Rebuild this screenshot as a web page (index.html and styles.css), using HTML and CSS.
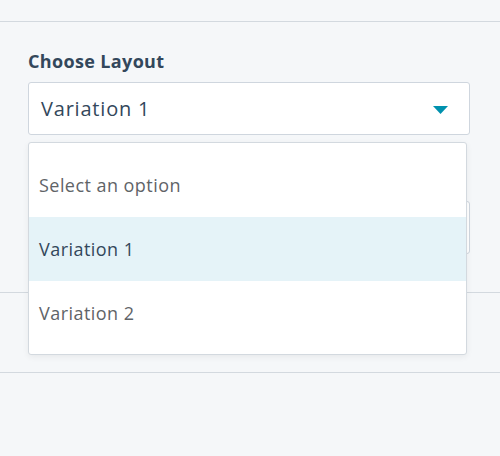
FILE: index.html
```html
<!DOCTYPE html>
<html>
<head>
<meta charset="utf-8">
<link rel="stylesheet" href="styles.css">
</head>
<body>
<div class="topbar"></div>
<div class="panel">
  <div class="field">
    <label class="label">Choose Layout</label>
    <div class="select">
      <span class="value">Variation 1</span>
      <svg class="caret" width="15" height="8" viewBox="0 0 15 8"><path d="M0 0 H15 L7.5 8 Z" fill="#0091ae"/></svg>
    </div>
  </div>
  <div class="field2">
    <div class="input"></div>
  </div>
  <div class="menu">
    <div class="option">Select an option</div>
    <div class="option active">Variation 1</div>
    <div class="option">Variation 2</div>
  </div>
</div>
<div class="section"></div>
<div class="footer"></div>
</body>
</html>
```
FILE: styles.css
```css
html, body {
  margin: 0;
  padding: 0;
  background: #f5f7f9;
  font-family: "Open Sans", "Noto Sans", sans-serif;
  color: #33475b;
}
.topbar {
  height: 21px;
  border-bottom: 1px solid #d3d9df;
}
.panel {
  position: relative;
  padding: 28px 30px 0 28px;
  height: 242px;
  border-bottom: 1px solid #d3d9df;
}
.label {
  display: block;
  font-weight: 700;
  font-size: 18px;
  line-height: 22px;
  letter-spacing: 0.35px;
  margin-bottom: 10px;
  color: #33475b;
}
.select {
  height: 51px;
  background: #fff;
  border: 1px solid #cfd6de;
  border-radius: 3px;
  display: flex;
  align-items: center;
  justify-content: space-between;
  padding: 0 21px 0 12px;
}
.value {
  font-size: 20px;
  letter-spacing: 0.8px;
  color: #33475b;
}
.caret {
  display: block;
  margin-top: 2px;
}
.field2 {
  margin-top: 66px;
}
.input {
  height: 51px;
  background: #fff;
  border: 1px solid #cfd6de;
  border-radius: 3px;
}
.menu {
  position: absolute;
  left: 28px;
  top: 120px;
  width: 437px;
  padding: 10px 0 9px;
  background: #fff;
  border: 1px solid #d3d9df;
  border-radius: 3px;
  box-shadow: 0 2px 6px rgba(0,0,0,0.06);
}
.option {
  height: 64px;
  display: flex;
  align-items: center;
  padding: 0 10px;
  font-size: 18px;
  letter-spacing: 0.45px;
  color: #5f6468;
}
.option.active {
  background: #e5f3f8;
  color: #33475b;
}
.section {
  height: 79px;
  border-bottom: 1px solid #d3d9df;
}
.footer {
  height: 100px;
}
```
